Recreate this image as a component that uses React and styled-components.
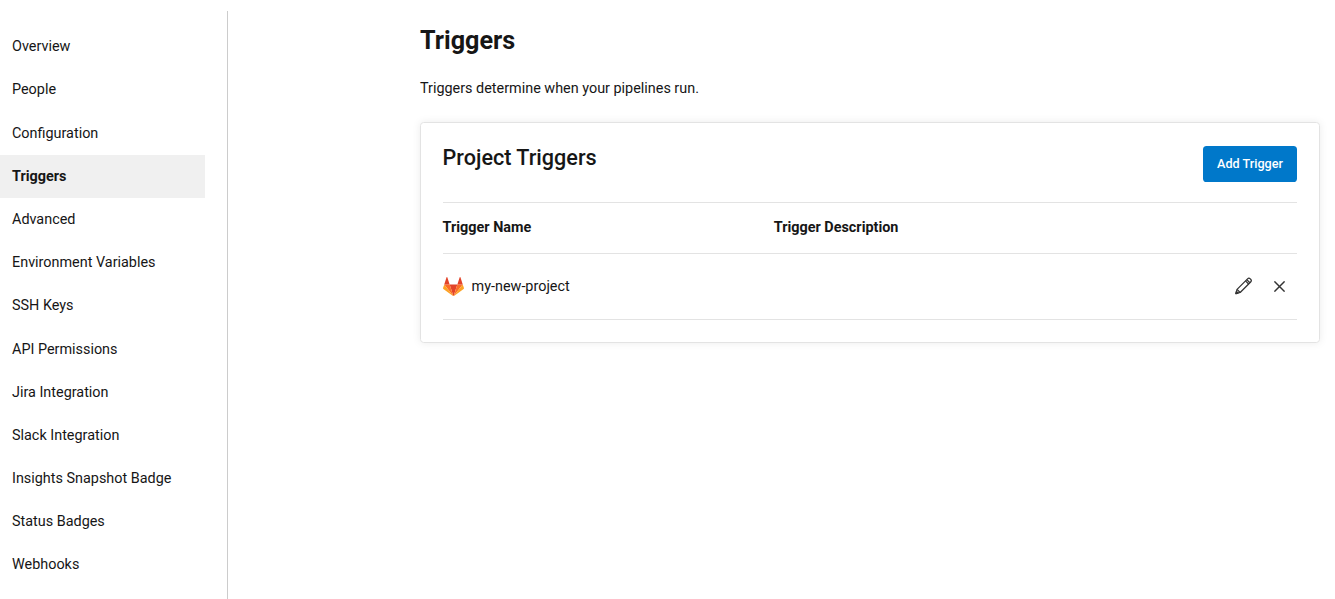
import React from 'react';
import styled, { createGlobalStyle } from 'styled-components';

const Global = createGlobalStyle`
  *, *::before, *::after { box-sizing: border-box; }
  body {
    margin: 0;
    background: #fff;
    color: #161616;
    font-family: Roboto, "Liberation Sans", sans-serif;
    font-size: 14.4px;
    line-height: 20px;
  }
  h1, h2, p { margin: 0; }
`;

const Page = styled.div`
  display: flex;
  height: 599px;
  padding-top: 11px;
  overflow: hidden;
`;

const Sidebar = styled.nav`
  flex: none;
  width: 228px;
  padding: 14.63px 22px 0 0;
  border-right: 1px solid #ccc;
`;

const NavItem = styled.a`
  display: flex;
  align-items: center;
  height: 43.1875px;
  padding-left: 12px;
  color: inherit;
  text-decoration: none;
  background: ${(p) => (p.$active ? '#f0f0f0' : 'transparent')};
  font-weight: ${(p) => (p.$active ? 700 : 400)};
`;

const Main = styled.main`
  flex: 1;
  padding: 14px 15px 0 192px;
`;

const Title = styled.h1`
  font-size: 25.2px;
  line-height: 32px;
  font-weight: 700;
`;

const Intro = styled.p`
  margin-top: 22px;
`;

const Card = styled.section`
  height: 221px;
  margin-top: 23px;
  padding: 23px 22px 0 21.6px;
  border: 1px solid #e3e3e3;
  border-radius: 3.6px;
  box-shadow: 0 0 9px rgba(0, 0, 0, 0.08);
`;

const CardHeader = styled.header`
  display: flex;
  justify-content: space-between;
  align-items: flex-start;
  height: 56px;
`;

const CardTitle = styled.h2`
  font-size: 21.6px;
  line-height: 24px;
  font-weight: 500;
`;

const Button = styled.button`
  width: 94px;
  height: 36px;
  padding: 0;
  border: 0;
  border-radius: 3.6px;
  background: #0078ca;
  color: #fff;
  font: 500 12.6px/18px Roboto, "Liberation Sans", sans-serif;
`;

const Row = styled.div`
  display: grid;
  grid-template-columns: 331.2px 1fr auto;
  align-items: center;
  height: ${(p) => (p.$header ? 51 : 66)}px;
  border-top: 1px solid #e3e3e3;
  font-weight: ${(p) => (p.$header ? 700 : 400)};
`;

const TableEnd = styled.div`
  border-top: 1px solid #e3e3e3;
`;

const Name = styled.div`
  grid-column: 1 / 3;
  display: flex;
  align-items: center;
  gap: 8px;
`;

const Actions = styled.div`
  display: flex;
  align-items: center;
  gap: 21.5px;
  padding: 0 12px 1px 0;
`;

const IconButton = styled.button`
  display: flex;
  padding: 0;
  border: 0;
  background: none;
  color: #343434;
`;

const items = [
  'Overview', 'People', 'Configuration', 'Triggers', 'Advanced',
  'Environment Variables', 'SSH Keys', 'API Permissions', 'Jira Integration',
  'Slack Integration', 'Insights Snapshot Badge', 'Status Badges', 'Webhooks',
];

const GitlabLogo = () => (
  <svg width="21" height="19.4" viewBox="0 0.9 24 22.2" aria-hidden="true">
    <path fill="#e24329" d="M12 23.054 16.418 9.45H7.582z" />
    <path fill="#fc6d26" d="M12 23.054 7.582 9.45H1.388z" />
    <path fill="#fca326" d="M1.388 9.45.045 13.587a.924.924 0 0 0 .33 1.03L12 23.054z" />
    <path fill="#e24329" d="M1.388 9.45h6.194L4.919 1.263a.455.455 0 0 0-.867 0z" />
    <path fill="#fc6d26" d="M12 23.054 16.418 9.45h6.194z" />
    <path fill="#fca326" d="m22.612 9.45 1.343 4.137a.924.924 0 0 1-.33 1.03L12 23.054z" />
    <path fill="#e24329" d="M22.612 9.45h-6.194l2.663-8.187a.455.455 0 0 1 .867 0z" />
  </svg>
);

const PencilIcon = () => (
  <svg width="17.5" height="17.5" viewBox="0 0 18 18" fill="none" stroke="currentColor" strokeWidth="1.3" strokeLinejoin="round" aria-hidden="true">
    <path d="M.9 17.1 2.1 12.7 12.9 1.9q1.4-1.4 2.8 0l.4.4q1.4 1.4 0 2.8L5.3 15.9z" />
    <path d="m2.1 12.7 3.2 3.2M10.8 4l3.2 3.2M12.1 2.7l3.2 3.2" />
    <path fill="currentColor" d="m.9 17.1.6-2.2 1.6 1.6z" />
  </svg>
);

const CloseIcon = () => (
  <svg width="11" height="11" viewBox="0 0 11 11" fill="none" stroke="currentColor" strokeWidth="1.45" aria-hidden="true">
    <path d="m.4.4 10.2 10.2M10.6.4.4 10.6" />
  </svg>
);

export default function App() {
  return (
    <>
      <Global />
      <Page>
        <Sidebar>
          {items.map((item) => (
            <NavItem key={item} $active={item === 'Triggers'}>{item}</NavItem>
          ))}
        </Sidebar>
        <Main>
          <Title>Triggers</Title>
          <Intro>Triggers determine when your pipelines run.</Intro>
          <Card>
            <CardHeader>
              <CardTitle>Project Triggers</CardTitle>
              <Button>Add Trigger</Button>
            </CardHeader>
            <Row $header>
              <span>Trigger Name</span>
              <span>Trigger Description</span>
            </Row>
            <Row>
              <Name>
                <GitlabLogo />
                <span>my-new-project</span>
              </Name>
              <Actions>
                <IconButton aria-label="Edit"><PencilIcon /></IconButton>
                <IconButton aria-label="Delete"><CloseIcon /></IconButton>
              </Actions>
            </Row>
            <TableEnd />
          </Card>
        </Main>
      </Page>
    </>
  );
}
